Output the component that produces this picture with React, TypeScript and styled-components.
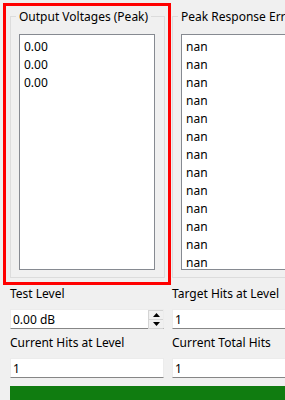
import React from 'react';
import styled, { createGlobalStyle } from 'styled-components';

const GlobalStyle = createGlobalStyle`
  html, body {
    margin: 0;
    padding: 0;
    width: 285px;
    height: 400px;
    overflow: hidden;
    background: #f0f0f0;
  }
  body {
    font-family: "Noto Sans", "Open Sans", "DejaVu Sans", sans-serif;
    font-size: 12px;
    color: #000;
  }
`;

// Layout
const Page = styled.div`
  width: 327px;
  padding: 16px 0 0 10px;
  display: flex;
  flex-direction: column;
`;

const GroupRow = styled.div`
  display: grid;
  grid-template-columns: 155px 155px;
  column-gap: 7px;
`;

const GroupCell = styled.div`
  position: relative;
`;

const Highlight = styled.div`
  position: absolute;
  top: -13px;
  left: -7px;
  right: -6px;
  bottom: -7px;
  border: 3px solid #ff0000;
  pointer-events: none;
`;

const Group = styled.div`
  position: relative;
  box-sizing: border-box;
  height: 262px;
  border: 1px solid #dcdcdc;
  padding: 17px 9px 7px 8px;
  display: flex;
  flex-direction: column;
`;

const GroupTitle = styled.span`
  position: absolute;
  top: -8px;
  left: 5px;
  padding: 0 3px;
  line-height: 16px;
  white-space: nowrap;
  background: #f0f0f0;
`;

const ListBox = styled.ul`
  flex: 1;
  margin: 0;
  padding: 3px 0 0 4px;
  list-style: none;
  background: #fff;
  border: 1px solid #868a91;
  overflow: hidden;
`;

const ListItem = styled.li`
  height: 18px;
  line-height: 18px;
  white-space: nowrap;
`;

// Form fields below the groups
const FieldGrid = styled.div`
  margin-top: 8px;
  display: grid;
  grid-template-columns: 155px 155px;
  column-gap: 7px;
  row-gap: 6px;
`;

const Field = styled.div`
  display: flex;
  flex-direction: column;
  gap: 7px;
`;

const Label = styled.label`
  line-height: 16px;
  white-space: nowrap;
`;

const TextBox = styled.div`
  box-sizing: border-box;
  height: 20px;
  width: 154px;
  display: flex;
  align-items: center;
  background: #fff;
  border: 1px solid #ececec;
  border-bottom-color: #868686;
  padding-left: 2px;
`;

const SpinBox = styled(TextBox)`
  padding-right: 0;
`;

const SpinValue = styled.span`
  flex: 1;
`;

const SpinButtons = styled.div`
  box-sizing: border-box;
  width: 15px;
  height: 19px;
  align-self: flex-start;
  display: flex;
  flex-direction: column;
  border: 1px solid #d4d4d4;
  border-right: none;
  background: #f0f0f0;
`;

const SpinButton = styled.div<{ $down?: boolean }>`
  flex: 1;
  display: flex;
  align-items: center;
  justify-content: center;
  border-top: ${(p) => (p.$down ? '1px solid #d4d4d4' : 'none')};
`;

const Progress = styled.div`
  margin-top: 8px;
  height: 20px;
  width: 316px;
  background: #107c10;
`;

const Arrow: React.FC<{ down?: boolean }> = ({ down }) => (
  <svg width="7" height="4" viewBox="0 0 7 4">
    {down ? <polygon points="0,0 7,0 3.5,4" fill="#000" /> : <polygon points="0,4 7,4 3.5,0" fill="#000" />}
  </svg>
);

const outputs = ['0.00', '0.00', '0.00'];
const errors = Array.from({ length: 13 }, () => 'nan');

const App: React.FC = () => {
  return (
    <>
      <GlobalStyle />
      <Page>
        <GroupRow>
          <GroupCell>
            <Group>
              <GroupTitle>Output Voltages (Peak)</GroupTitle>
              <ListBox>
                {outputs.map((v, i) => (
                  <ListItem key={i}>{v}</ListItem>
                ))}
              </ListBox>
            </Group>
            <Highlight />
          </GroupCell>
          <GroupCell>
            <Group>
              <GroupTitle>Peak Response Error (dB)</GroupTitle>
              <ListBox>
                {errors.map((v, i) => (
                  <ListItem key={i}>{v}</ListItem>
                ))}
              </ListBox>
            </Group>
          </GroupCell>
        </GroupRow>

        <FieldGrid>
          <Field>
            <Label>Test Level</Label>
            <SpinBox>
              <SpinValue>0.00 dB</SpinValue>
              <SpinButtons>
                <SpinButton>
                  <Arrow />
                </SpinButton>
                <SpinButton $down>
                  <Arrow down />
                </SpinButton>
              </SpinButtons>
            </SpinBox>
          </Field>
          <Field>
            <Label>Target Hits at Level</Label>
            <TextBox>1</TextBox>
          </Field>
          <Field>
            <Label>Current Hits at Level</Label>
            <TextBox>1</TextBox>
          </Field>
          <Field>
            <Label>Current Total Hits</Label>
            <TextBox>1</TextBox>
          </Field>
        </FieldGrid>

        <Progress />
      </Page>
    </>
  );
};

export default App;
